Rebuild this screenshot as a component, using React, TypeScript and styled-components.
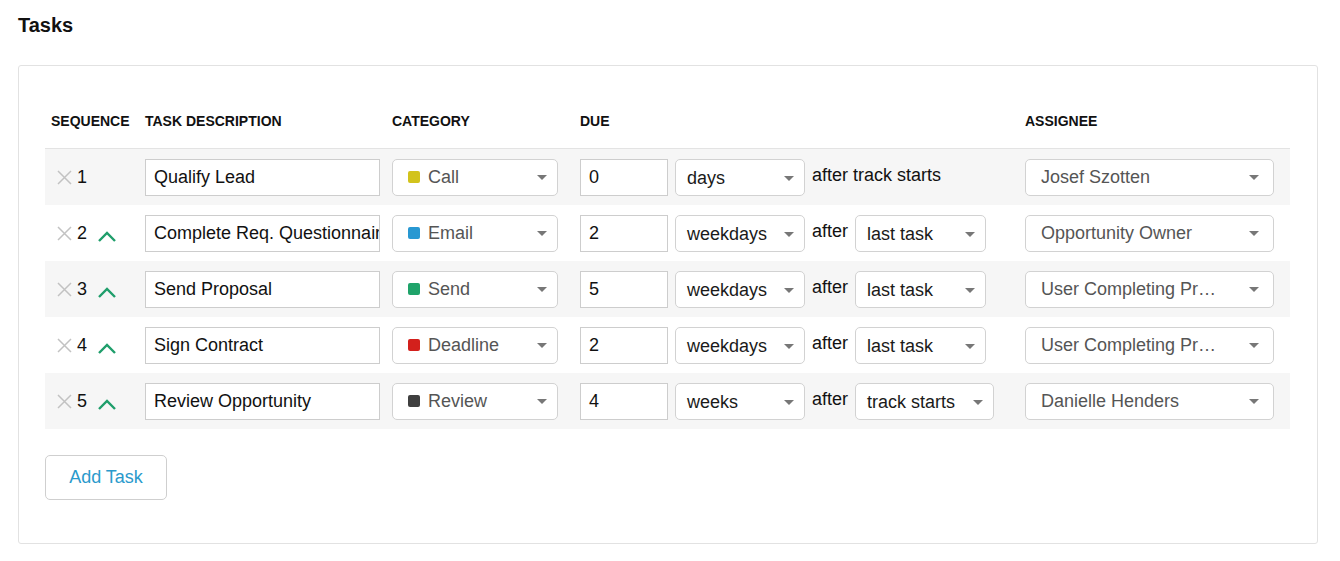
import React from 'react';
import styled, { createGlobalStyle } from 'styled-components';

const GlobalStyle = createGlobalStyle`
  body {
    margin: 0;
    background: #fff;
    font-family: "Liberation Sans", Arial, sans-serif;
    color: #111;
  }
`;

type Task = {
  seq: number;
  description: string;
  category: string;
  color: string;
  amount: string;
  unit: string;
  relation?: string;
  assignee: string;
};

const tasks: Task[] = [
  { seq: 1, description: 'Qualify Lead', category: 'Call', color: '#d2c31c', amount: '0', unit: 'days', assignee: 'Josef Szotten' },
  { seq: 2, description: 'Complete Req. Questionnaire', category: 'Email', color: '#2898d2', amount: '2', unit: 'weekdays', relation: 'last task', assignee: 'Opportunity Owner' },
  { seq: 3, description: 'Send Proposal', category: 'Send', color: '#1fa36a', amount: '5', unit: 'weekdays', relation: 'last task', assignee: 'User Completing Pr…' },
  { seq: 4, description: 'Sign Contract', category: 'Deadline', color: '#d3201c', amount: '2', unit: 'weekdays', relation: 'last task', assignee: 'User Completing Pr…' },
  { seq: 5, description: 'Review Opportunity', category: 'Review', color: '#3f3f3f', amount: '4', unit: 'weeks', relation: 'track starts', assignee: 'Danielle Henders' },
];

const Page = styled.div`
  padding: 0 22px 0 18px;
`;

const Title = styled.h2`
  margin: 0;
  height: 65px;
  display: flex;
  align-items: center;
  padding-bottom: 15px;
  box-sizing: border-box;
  font-size: 20px;
  font-weight: 600;
  color: #111;
`;

const Card = styled.div`
  border: 1px solid #e2e2e2;
  border-radius: 3px;
  padding: 0 27px 43px 26px;
`;

const columns = '100px 247px 188px 445px 265px';

const HeaderRow = styled.div`
  display: grid;
  grid-template-columns: ${columns};
  height: 83px;
  align-items: end;
  padding-bottom: 19px;
  box-sizing: border-box;
  border-bottom: 1px solid #e3e3e3;
`;

const HeaderCell = styled.div<{ $indent?: number }>`
  font-size: 14px;
  font-weight: 700;
  color: #111;
  padding-left: ${(p) => p.$indent ?? 0}px;
`;

const Row = styled.div<{ $shaded: boolean }>`
  display: grid;
  grid-template-columns: ${columns};
  height: 56px;
  align-items: center;
  background: ${(p) => (p.$shaded ? '#f6f6f6' : '#fff')};
`;

const SeqCell = styled.div`
  display: flex;
  align-items: center;
  padding-left: 12px;
  font-size: 18px;
  color: #111;
`;

const SeqNumber = styled.span`
  margin-left: 5px;
  width: 20px;
`;

const TextInput = styled.div<{ $width: number }>`
  width: ${(p) => p.$width}px;
  height: 37px;
  box-sizing: border-box;
  border: 1px solid #cdcdcd;
  background: #fff;
  padding: 0 8px;
  display: flex;
  align-items: center;
  font-size: 18px;
  color: #111;
  white-space: nowrap;
  overflow: hidden;
`;

const Select = styled.div<{ $width?: number; $muted?: boolean; $low?: boolean }>`
  ${(p) => (p.$width ? `width: ${p.$width}px;` : '')}
  height: 37px;
  box-sizing: border-box;
  border: 1px solid #d2d2d2;
  border-radius: 5px;
  background: #fff;
  display: flex;
  align-items: center;
  padding: ${(p) => (p.$low ? '3px' : '0')} 10px 0 11px;
  font-size: 18px;
  color: ${(p) => (p.$muted ? '#555' : '#1a1a1a')};
  white-space: nowrap;
  gap: 8px;
`;

const SelectLabel = styled.span`
  flex: 1;
`;

const Swatch = styled.span<{ $color: string }>`
  width: 12px;
  height: 12px;
  border-radius: 2px;
  background: ${(p) => p.$color};
  margin-left: 4px;
`;

const Caret = styled.span`
  width: 0;
  height: 0;
  border-left: 5px solid transparent;
  border-right: 5px solid transparent;
  border-top: 5px solid #777;
  margin-left: 8px;
`;

const DueCell = styled.div`
  display: flex;
  align-items: center;
  gap: 7px;
`;

const AfterText = styled.span`
  font-size: 18px;
  color: #111;
  margin-top: -4px;
`;

const Footer = styled.div`
  padding-top: 26px;
`;

const AddButton = styled.button`
  width: 122px;
  height: 45px;
  border: 1px solid #cfcfcf;
  border-radius: 5px;
  background: #fff;
  color: #2a9acc;
  font-family: "Liberation Sans", Arial, sans-serif;
  font-size: 18px;
  cursor: pointer;
`;

const RemoveIcon = () => (
  <svg width="15" height="15" viewBox="0 0 15 15">
    <path d="M1 1 L14 14 M14 1 L1 14" stroke="#c2c2c2" strokeWidth="1.5" fill="none" />
  </svg>
);

const UpIcon = () => (
  <svg width="20" height="14" viewBox="0 0 20 14" style={{ marginTop: 7 }}>
    <path d="M2 11 L10 3 L18 11" stroke="#1f9e6b" strokeWidth="2.4" fill="none" />
  </svg>
);

function TaskRow({ task, shaded }: { task: Task; shaded: boolean }) {
  return (
    <Row $shaded={shaded}>
      <SeqCell>
        <RemoveIcon />
        <SeqNumber>{task.seq}</SeqNumber>
        {task.seq > 1 && <UpIcon />}
      </SeqCell>
      <div>
        <TextInput $width={235}>{task.description}</TextInput>
      </div>
      <div>
        <Select $width={166} $muted>
          <Swatch $color={task.color} />
          <SelectLabel>{task.category}</SelectLabel>
          <Caret />
        </Select>
      </div>
      <DueCell>
        <TextInput $width={88}>{task.amount}</TextInput>
        <Select $width={130} $low>
          <SelectLabel>{task.unit}</SelectLabel>
          <Caret />
        </Select>
        {task.relation ? (
          <>
            <AfterText>after</AfterText>
            <Select $width={task.relation === 'track starts' ? 139 : 131} $low>
              <SelectLabel>{task.relation}</SelectLabel>
              <Caret />
            </Select>
          </>
        ) : (
          <AfterText>after track starts</AfterText>
        )}
      </DueCell>
      <div>
        <Select $width={249} $muted style={{ paddingLeft: 15, paddingRight: 14 }}>
          <SelectLabel>{task.assignee}</SelectLabel>
          <Caret />
        </Select>
      </div>
    </Row>
  );
}

export default function App() {
  return (
    <>
      <GlobalStyle />
      <Page>
        <Title>Tasks</Title>
        <Card>
          <HeaderRow>
            <HeaderCell $indent={6}>SEQUENCE</HeaderCell>
            <HeaderCell>TASK DESCRIPTION</HeaderCell>
            <HeaderCell>CATEGORY</HeaderCell>
            <HeaderCell>DUE</HeaderCell>
            <HeaderCell>ASSIGNEE</HeaderCell>
          </HeaderRow>
          {tasks.map((t, i) => (
            <TaskRow key={t.seq} task={t} shaded={i % 2 === 0} />
          ))}
          <Footer>
            <AddButton>Add Task</AddButton>
          </Footer>
        </Card>
      </Page>
    </>
  );
}
